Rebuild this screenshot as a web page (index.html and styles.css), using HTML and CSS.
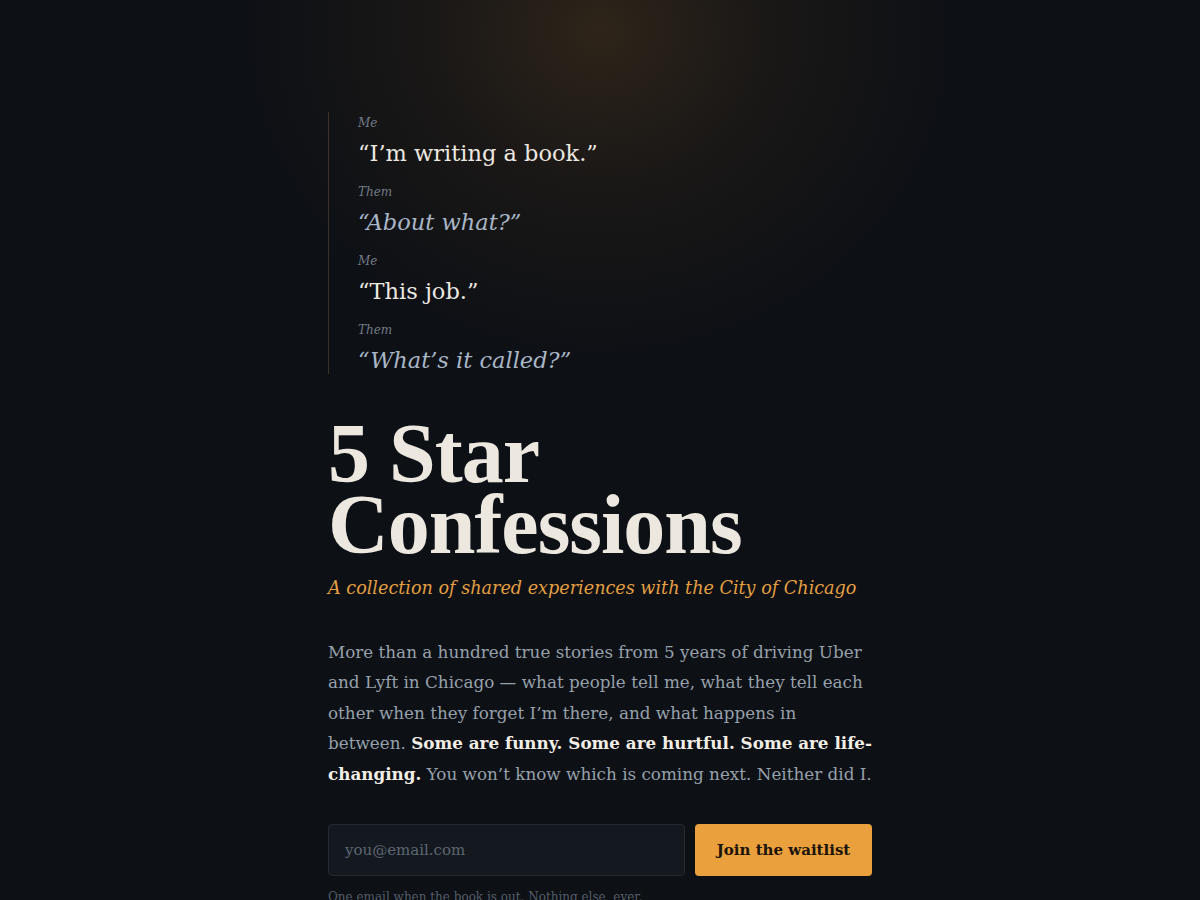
FILE: index.html
```html
<!DOCTYPE html>
<html lang="en">
<head>
<meta charset="utf-8">
<title>5 Star Confessions</title>
<link rel="stylesheet" href="styles.css">
</head>
<body>
<div class="glow"></div>
<main class="page">
  <section class="dialogue">
    <div class="turn">
      <div class="who">Me</div>
      <div class="line me">“I’m writing a book.”</div>
    </div>
    <div class="turn">
      <div class="who">Them</div>
      <div class="line them">“About what?”</div>
    </div>
    <div class="turn">
      <div class="who">Me</div>
      <div class="line me">“This job.”</div>
    </div>
    <div class="turn">
      <div class="who">Them</div>
      <div class="line them">“What’s it called?”</div>
    </div>
  </section>
  <h1 class="title">5 Star<br>Confessions</h1>
  <p class="subtitle">A collection of shared experiences with the City of Chicago</p>
  <p class="intro">More than a hundred true stories from 5 years of driving Uber and Lyft in Chicago — what people tell me, what they tell each other when they forget I’m there, and what happens in between. <strong>Some are funny. Some are hurtful. Some are life-changing.</strong> You won’t know which is coming next. Neither did I.</p>
  <form class="signup">
    <input class="email" type="email" placeholder="you@email.com">
    <button class="join" type="button">Join the waitlist</button>
  </form>
  <p class="note">One email when the book is out. Nothing else, ever.</p>
</main>
</body>
</html>
```

FILE: styles.css
```css
html, body {
  margin: 0;
  padding: 0;
}
body {
  background: #0d1015;
  color: #e9e5dd;
  font-family: "DejaVu Serif", serif;
  min-height: 900px;
  overflow: hidden;
  position: relative;
}
.glow {
  position: absolute;
  left: 0;
  top: 0;
  width: 1200px;
  height: 700px;
  background: radial-gradient(ellipse 360px 330px at 600px 30px, rgba(52, 40, 26, 0.85) 0%, rgba(40, 32, 24, 0.5) 45%, rgba(13, 16, 21, 0) 100%);
  pointer-events: none;
}
.page {
  position: relative;
  width: 544px;
  margin: 0 auto;
  padding-top: 112px;
}
.dialogue {
  border-left: 1px solid #3a332b;
  padding: 3px 0 0 29px;
  display: flex;
  flex-direction: column;
  gap: 17px;
}
.who {
  font-style: italic;
  font-size: 12px;
  line-height: 17px;
  color: #737b86;
  margin-bottom: 7px;
}
.line {
  font-size: 22.5px;
  line-height: 28px;
}
.line.me {
  color: #ece8e0;
}
.line.them {
  color: #a9b6c6;
  font-style: italic;
}
.title {
  font-family: "Liberation Serif", serif;
  font-weight: bold;
  font-size: 84px;
  line-height: 71px;
  letter-spacing: -1px;
  color: #ece8e0;
  margin: 44px 0 0;
}
.subtitle {
  font-style: italic;
  font-size: 17.6px;
  line-height: 28px;
  color: #e39f42;
  margin: 14px 0 0;
}
.intro {
  font-size: 16.8px;
  line-height: 30.4px;
  color: #96a0ab;
  margin: 35px 0 0;
}
.intro strong {
  color: #f2eee6;
  font-weight: bold;
}
.signup {
  display: flex;
  gap: 10px;
  margin-top: 35px;
}
.email {
  flex: 1;
  height: 52px;
  box-sizing: border-box;
  background: #141920;
  border: 1px solid #252b33;
  border-radius: 4px;
  padding: 0 16px;
  font-family: "DejaVu Serif", serif;
  font-size: 15px;
  color: #e9e5dd;
  outline: none;
}
.email::placeholder {
  color: #5e6671;
}
.join {
  width: 177px;
  height: 52px;
  background: #e9a03d;
  border: 0;
  border-radius: 4px;
  font-family: "DejaVu Serif", serif;
  font-weight: bold;
  font-size: 15px;
  color: #1c1309;
  cursor: pointer;
}
.note {
  font-size: 12px;
  line-height: 18px;
  color: #565e69;
  margin: 12px 0 0;
}
```
